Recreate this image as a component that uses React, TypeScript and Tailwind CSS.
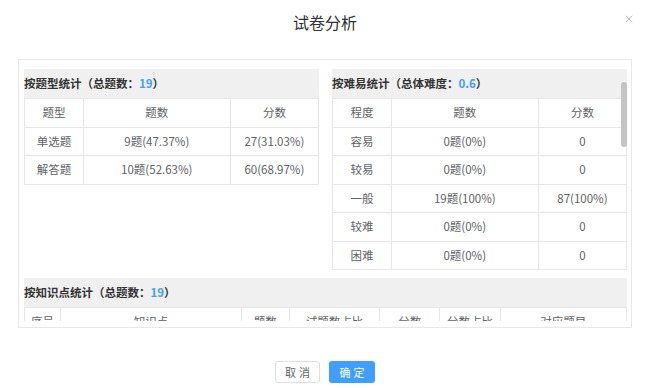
import { X } from 'lucide-react';

const typeRows = [
  ['单选题', '9题(47.37%)', '27(31.03%)'],
  ['解答题', '10题(52.63%)', '60(68.97%)'],
];

const levelRows = [
  ['容易', '0题(0%)', '0'],
  ['较易', '0题(0%)', '0'],
  ['一般', '19题(100%)', '87(100%)'],
  ['较难', '0题(0%)', '0'],
  ['困难', '0题(0%)', '0'],
];

const pointCols = [
  ['序号', 'w-[6%]'],
  ['知识点', 'w-[30%]'],
  ['题数', 'w-[8%]'],
  ['试题数占比', 'w-[15%]'],
  ['分数', 'w-[10%]'],
  ['分数占比', 'w-[10%]'],
  ['对应题目', 'w-[21%]'],
];

const cell = 'h-[28.5px] border border-[#e6e6e6] text-center text-[11.5px] text-[#606266] font-normal p-0';

const SectionTitle = ({ label, value }: { label: string; value: string }) => (
  <div className="h-[29px] bg-[#f0f0f0] flex items-center text-[11.5px] font-bold text-[#333]">
    {label}（{label === '按难易统计' ? '总体难度' : '总题数'}：<span className="text-[#409eff]">{value}</span>）
  </div>
);

const StatTable = ({ head, rows }: { head: string[]; rows: string[][] }) => (
  <table className="w-full border-collapse table-fixed bg-white">
    <thead>
      <tr>
        <th className={`${cell} w-[20%]`}>{head[0]}</th>
        <th className={`${cell} w-[50%]`}>{head[1]}</th>
        <th className={`${cell} w-[30%]`}>{head[2]}</th>
      </tr>
    </thead>
    <tbody>
      {rows.map((r) => (
        <tr key={r[0]}>
          {r.map((c, i) => (
            <td key={i} className={cell}>{c}</td>
          ))}
        </tr>
      ))}
    </tbody>
  </table>
);

export default function App() {
  return (
    <div
      className="w-[650px] h-[388px] bg-white relative flex flex-col"
      style={{ fontFamily: '"Noto Sans CJK SC", "Liberation Sans", sans-serif' }}
    >
      <div className="h-[44px] flex items-center justify-center text-[16px] text-[#303133]">试卷分析</div>
      <X className="absolute right-[15px] top-[13px] text-[#909399]" size={12} strokeWidth={1.25} />

      <div className="mt-[15px] mx-[18px] h-[269px] border border-[#e8e8e8] relative">
        <div className="h-[261px] overflow-hidden pt-[9px] pl-[5px] pr-[4px]">
          <div className="grid grid-cols-2 gap-[13px]">
            <div>
              <SectionTitle label="按题型统计" value="19" />
              <StatTable head={['题型', '题数', '分数']} rows={typeRows} />
            </div>
            <div>
              <SectionTitle label="按难易统计" value="0.6" />
              <StatTable head={['程度', '题数', '分数']} rows={levelRows} />
            </div>
          </div>

          <div className="mt-[8px]">
            <SectionTitle label="按知识点统计" value="19" />
            <table className="w-full border-collapse table-fixed bg-white">
              <thead>
                <tr>
                  {pointCols.map(([t, w]) => (
                    <th key={t} className={`${cell} ${w}`}>{t}</th>
                  ))}
                </tr>
              </thead>
            </table>
          </div>
        </div>
        <div className="absolute right-[4px] top-[22px] w-[6px] h-[65px] rounded-full bg-[#c4c4c4]" />
      </div>

      <div className="mt-[33px] flex justify-center gap-[9px]">
        <button className="w-[45px] h-[22px] border border-[#dcdfe6] rounded-[3px] bg-white text-[11px] text-[#606266] tracking-[3px] pl-[3px]">
          取消
        </button>
        <button className="w-[46px] h-[22px] rounded-[3px] bg-[#409eff] text-[11px] text-white tracking-[3px] pl-[3px]">
          确定
        </button>
      </div>
    </div>
  );
}
